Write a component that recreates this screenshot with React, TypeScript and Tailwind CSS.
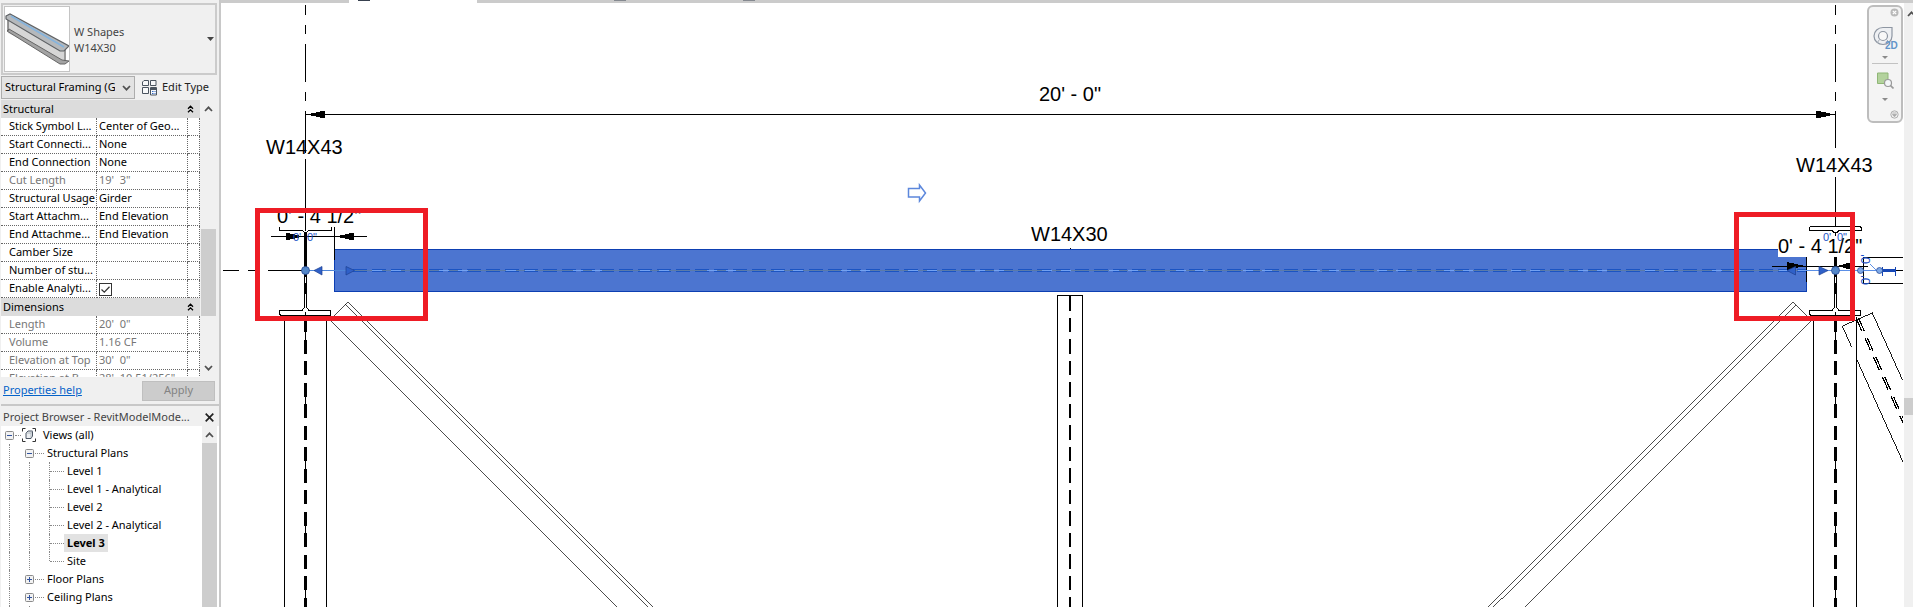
import React from "react";

type Property = { label: string; value: string; muted?: boolean; check?: boolean };
type Group = { title: string; rows: Property[] };

const groups: Group[] = [
  {
    title: "Structural",
    rows: [
      { label: "Stick Symbol L...", value: "Center of Geo..." },
      { label: "Start Connecti...", value: "None" },
      { label: "End Connection", value: "None" },
      { label: "Cut Length", value: "19'  3\"", muted: true },
      { label: "Structural Usage", value: "Girder" },
      { label: "Start Attachm...", value: "End Elevation" },
      { label: "End Attachme...", value: "End Elevation" },
      { label: "Camber Size", value: "" },
      { label: "Number of stu...", value: "" },
      { label: "Enable Analyti...", value: "", check: true },
    ],
  },
  {
    title: "Dimensions",
    rows: [
      { label: "Length", value: "20'  0\"", muted: true },
      { label: "Volume", value: "1.16 CF", muted: true },
      { label: "Elevation at Top", value: "30'  0\"", muted: true },
      { label: "Elevation at B...", value: "28'  10 51/256\"", muted: true },
    ],
  },
];

function Chevron({ up = false, className = "" }: { up?: boolean; className?: string }) {
  return (
    <svg viewBox="0 0 9 6" width="9" height="6" className={className} aria-hidden="true">
      <path d={up ? "M1 5 4.5 1.3 8 5" : "M1 1 4.5 4.7 8 1"} fill="none" stroke="#505050" strokeWidth="1.7" />
    </svg>
  );
}

function BeamPreview() {
  return (
    <svg viewBox="0 0 64 64" className="h-full w-full" aria-hidden="true">
      <path d="M3 10 59 43 59 54 3 26Z" fill="#d6d6d6" />
      <path d="M2 24 4 22 57 53 64 54 60 57 55 57Z" fill="#a3a3a3" stroke="#666" strokeWidth="1" />
      <path d="M3 11v13M60 42v12" stroke="#666" strokeWidth="1.3" />
      <path d="M1 9 5 7 64 39 59 44 55 44 1 12Z" fill="#b5b8bb" stroke="#5f6265" strokeWidth="1.2" />
      <path d="M6 9 59 40" stroke="#86b4dd" strokeWidth="1.8" />
    </svg>
  );
}

function EditTypeIcon() {
  return (
    <svg viewBox="0 0 17 17" width="17" height="17" aria-hidden="true">
      <g fill="#f7f8f9" stroke="#4a545f" strokeWidth="1">
        <path d="M3 1.5h4.500v5h-6V3zM9.500 1.500h5.500v5h-5.500zM1.500 8.500h6v6h-6z" />
        <path d="M9.500 8.500h6v7.500h-6z" />
      </g>
      <path d="M10 9h5v2h-5z" fill="#4a545f" />
      <path d="M11 12.500h1.500M13.500 12.500h1M11 14.500h1.500M13.500 14.500h1" stroke="#2f67c4" />
    </svg>
  );
}

function CheckBox({ id }: { id: string }) {
  return (
    <span className="grid h-[13px] w-[13px]">
      <input
        id={id}
        type="checkbox"
        defaultChecked
        className="peer col-start-1 row-start-1 h-[13px] w-[13px] appearance-none border border-[#333] bg-white"
      />
      <svg
        viewBox="0 0 13 13"
        width="13"
        height="13"
        className="pointer-events-none invisible col-start-1 row-start-1 peer-checked:visible"
        aria-hidden="true"
      >
        <path d="M2.500 6.500 5.300 9.200 10.500 3.800" fill="none" stroke="#333" strokeWidth="1.300" />
      </svg>
    </span>
  );
}

function PropertyTable() {
  return (
    <table className="w-[199px] table-fixed border-separate border-spacing-0 bg-white">
      <colgroup>
        <col className="w-[96px]" />
        <col className="w-[91px]" />
        <col className="w-[12px]" />
      </colgroup>
      {groups.map((g) => (
        <tbody key={g.title}>
          <tr>
            <th colSpan={3} className="h-[18px] bg-[#dcdcdc] p-0 font-normal">
              <div className="flex h-[18px] items-center justify-between pl-[2px] pr-1">
                <span>{g.title}</span>
                <button type="button" aria-label={`Collapse ${g.title}`} className="flex w-[11px] justify-center">
                  <svg viewBox="0 0 7 8" width="7" height="8" aria-hidden="true">
                    <path d="M1 3.700 3.500 1.200 6 3.700M1 7.300 3.500 4.800 6 7.300" fill="none" stroke="#000" strokeWidth="1.300" />
                  </svg>
                </button>
              </div>
            </th>
          </tr>
          {g.rows.map((r) => (
            <tr key={r.label} className={r.muted ? "text-[#767676]" : ""}>
              <td className="h-[18px] overflow-hidden whitespace-nowrap border-b border-r border-dotted border-[#666] p-0 pl-2">
                <div className="h-[17px] leading-[15px]">
                  {r.check ? <label htmlFor="analytical">{r.label}</label> : r.label}
                </div>
              </td>
              <td className="overflow-hidden whitespace-pre border-b border-r border-dotted border-[#666] p-0 pl-[2px]">
                {r.check ? (
                  <div className="flex h-[17px] items-end pb-px">
                    <CheckBox id="analytical" />
                  </div>
                ) : (
                  <div className="h-[17px] leading-[15px]">{r.value}</div>
                )}
              </td>
              <td className="border-b border-r border-dotted border-[#666] p-0" />
            </tr>
          ))}
        </tbody>
      ))}
    </table>
  );
}

function PropertiesPanel() {
  return (
    <section aria-label="Properties" className="flex h-[404px] shrink-0 flex-col pt-[3px]">
      <button
        type="button"
        className="mr-[2px] flex h-[72px] items-center border-2 border-[#cbcbcb] pl-px pr-px text-left text-[#444]"
      >
        <span className="h-[66px] w-[66px] border border-[#c4c4c4] bg-white">
          <BeamPreview />
        </span>
        <span className="flex-1 pl-1 pt-[2px] leading-4">
          W Shapes
          <br />
          W14X30
        </span>
        <svg viewBox="0 0 7 4" width="7" height="4" aria-hidden="true">
          <path d="M0 0h7L3.500 4z" fill="#444" />
        </svg>
      </button>

      <div className="flex h-[25px] items-center">
        <div className="relative flex h-[23px] w-[134px]">
          <select
            aria-label="Category"
            className="w-full appearance-none overflow-hidden border border-[#adadad] bg-[#e3e3e3] pl-[3px] pr-[19px] text-black"
          >
            <option>Structural Framing (G</option>
          </select>
          <Chevron className="pointer-events-none absolute right-1 top-[9px]" />
        </div>
        <button type="button" className="flex items-center gap-1 pl-[6px] text-[#222]">
          <EditTypeIcon />
          Edit Type
        </button>
      </div>

      <div className="flex h-[277px] overflow-hidden">
        <PropertyTable />
        <div className="ml-px flex w-[15px] flex-col items-center bg-[#f0f0f0] py-[6px]">
          <Chevron up />
          <div className="mt-[117px] h-[87px] w-full bg-[#cdcdcd]" />
          <Chevron className="mt-auto" />
        </div>
      </div>

      <div className="flex flex-1 items-center justify-between pl-[2px] pr-1">
        <a href="#help" className="text-[#0563c9] underline">
          Properties help
        </a>
        <button type="button" disabled className="h-5 w-[73px] border border-[#bfbfbf] bg-[#cccccc] text-[#838383]">
          Apply
        </button>
      </div>
    </section>
  );
}

function Rail() {
  return (
    <span className="flex w-5 shrink-0 self-stretch pl-2">
      <span className="border-l border-dotted border-[#888]" />
    </span>
  );
}

function Dots({ className }: { className: string }) {
  return <span className={`border-t border-dotted border-[#888] ${className}`} />;
}

function Toggle({ open }: { open: boolean }) {
  return (
    <button type="button" aria-label={open ? "Collapse" : "Expand"} className="ml-1 shrink-0">
      <svg viewBox="0 0 9 9" width="9" height="9" className="block" aria-hidden="true">
        <rect x=".5" y=".5" width="8" height="8" rx="1" fill="#f2f2f2" stroke="#8b8b8b" />
        <path d={open ? "M2 4.500h5" : "M2 4.500h5M4.500 2v5"} stroke="#31539f" />
      </svg>
    </button>
  );
}

function TreeGroup({ name, open, items = [] }: { name: string; open: boolean; items?: string[] }) {
  return (
    <li>
      <div className="flex h-[18px] items-center">
        <Rail />
        <Toggle open={open} />
        <Dots className="ml-px w-[9px]" />
        <span className="pl-[3px]">{name}</span>
      </div>
      {items.length > 0 && (
        <ul>
          {items.map((item, i) => (
            <li key={item} className="flex h-[18px] items-center">
              <Rail />
              <Rail />
              <span className="flex w-[23px] items-center self-stretch pl-2">
                <span
                  className={
                    i === items.length - 1
                      ? "h-[9px] self-start border-l border-dotted border-[#888]"
                      : "self-stretch border-l border-dotted border-[#888]"
                  }
                />
                <Dots className="flex-1" />
              </span>
              {item === "Level 3" ? (
                <a href="#view" className="bg-[#e2e2e2] px-[3px] font-bold leading-[18px]">
                  {item}
                </a>
              ) : (
                <a href="#view" className="px-[3px] leading-[18px]">
                  {item}
                </a>
              )}
            </li>
          ))}
        </ul>
      )}
    </li>
  );
}

function ProjectBrowser() {
  return (
    <section aria-label="Project Browser" className="flex min-h-0 flex-1 flex-col border-t-2 border-[#c8c8c8]">
      <div className="flex h-5 shrink-0 items-center justify-between pl-[2px] pr-[5px] pt-[2px] text-[#444]">
        <h2 className="whitespace-nowrap">Project Browser - RevitModelMode...</h2>
        <button type="button" aria-label="Close">
          <svg viewBox="0 0 9 9" width="9" height="9" aria-hidden="true">
            <path d="M.7.7 8.300 8.300M8.300.7.7 8.300" stroke="#222" strokeWidth="1.700" />
          </svg>
        </button>
      </div>
      <div className="flex min-h-0 flex-1 bg-white">
        <ul className="min-w-0 flex-1 overflow-hidden text-black">
          <li>
            <div className="flex h-[18px] items-center">
              <Toggle open />
              <Dots className="mx-px w-[6px]" />
              <svg viewBox="0 0 14 14" width="14" height="14" aria-hidden="true">
                <path d="M3.500.5h-3v3M10.500.5h3v3M.5 10.500v3h3M13.500 10.500v3h-3" fill="none" stroke="#333" />
                <path d="M4 5 6 3h4.500v5L9 10.500H4z" fill="#eceff2" stroke="#4b5563" />
                <path d="M4 5h5v5M9 5l1.500-2" fill="none" stroke="#9aa3ad" strokeWidth=".7" />
              </svg>
              <span className="pl-[7px]">Views (all)</span>
            </div>
            <ul>
              <TreeGroup
                name="Structural Plans"
                open
                items={["Level 1", "Level 1 - Analytical", "Level 2", "Level 2 - Analytical", "Level 3", "Site"]}
              />
              <TreeGroup name="Floor Plans" open={false} />
              <TreeGroup name="Ceiling Plans" open={false} />
              <li className="flex h-[18px]">
                <Rail />
                <Rail />
              </li>
            </ul>
          </li>
        </ul>
        <div className="mr-[2px] flex w-[15px] flex-col items-center bg-[#f0f0f0] pt-[6px]">
          <Chevron up />
          <div className="mt-[5px] w-full flex-1 bg-[#cdcdcd]" />
        </div>
      </div>
    </section>
  );
}

/* Column seen in elevation: face lines, dashed web and the grid line behind it. */
function Column({ x, left, right }: { x: number; left: number; right: number }) {
  return (
    <g stroke="#000">
      <path d={`M${left} 319V900M${right} 317V900`} />
      <path d={`M${x} 318V900`} strokeWidth="3" strokeDasharray="14 7.5" />
      <path d={`M${x} 332V900`} strokeDasharray="8 56.500" />
    </g>
  );
}

/* Wide-flange section in plan at a grid intersection. */
function Section({ x, thickFrom }: { x: number; thickFrom: number }) {
  return (
    <g stroke="#000" fill="none">
      <path d={`M${x} ${thickFrom}V277`} strokeWidth="3" />
      <path d={`M${x - 1} 277V308M${x + 1} 277V308`} />
      <path d={`M${x} 283V302`} strokeDasharray="11 8" />
      <path d={`M${x - 1} 307l-2 3h-22l-1 1v3l1 1h50v-5h-22l-2-3`} />
      <path d={`M${x} 312V319`} />
    </g>
  );
}

function Drawing() {
  return (
    <svg
      viewBox="221 3 1683 604"
      preserveAspectRatio="xMinYMin slice"
      className="block h-full w-full"
      shapeRendering="crispEdges"
      fontFamily="'Liberation Sans', Arial, sans-serif"
      fontSize="20"
      role="img"
      aria-label="Structural framing elevation"
    >
      {/* grid lines */}
      <g stroke="#000" fill="none">
        <path d="M305.500 5v10M305.500 25v9M305.500 44v38M305.500 92v9M305.500 111v42M305.500 159v72" />
        <path d="M1835.500 5v10M1835.500 25v9M1835.500 44v38M1835.500 92v9M1835.500 111v37M1835.500 177v80" />
        <path d="M223 270.500h16M248 270.500h8M268 270.500h36" />
      </g>

      {/* overall dimension */}
      <path d="M305 114.500H1836" stroke="#000" />
      <path d="M306 114.500l19-4v8zM1835 114.500l-19-4v8z" />
      <text x="1039" y="101">20' - 0"</text>
      <text x="266" y="154">W14X43</text>
      <text x="1796" y="172">W14X43</text>
      <text x="1031" y="241">W14X30</text>
      <path d="M1070.500 248v3" stroke="#000" />

      <path
        d="M908.500 188.500h11v-3.500l6 8-6 8v-4h-11z"
        fill="#fff"
        stroke="#5c87dc"
        strokeWidth="1.500"
        shapeRendering="auto"
      />

      {/* braces and posts */}
      <g stroke="#000" fill="none">
        <g strokeWidth=".7">
          <path d="M334 316 348 302 953 907M345.500 304 948 907M331 321 917 907" />
          <path d="M1810 319 1793 302 1188 907M1796 305 1193 907M1811 321 1225 907" />
        </g>
        <path d="M1057.500 900V295.500H1082.500V900" />
        <path d="M1070 296V900" strokeWidth="2" strokeDasharray="14.500 7" />
        <g strokeWidth=".9">
          <path d="M1852 347 1842.500 325.500 1872.500 312.500 1903 380M1857 360 1903 462" />
          <path d="M1856 318 1903 423M1858.500 318 1903 418" strokeDasharray="14 7.500" strokeWidth="1.200" />
        </g>
      </g>
      <Column x={305.5} left={284.5} right={326.5} />
      <Column x={1835.5} left={1813.5} right={1856.5} />

      {/* selected girder */}
      <rect x="334.500" y="249.500" width="1472" height="42" fill="#4c75d0" stroke="#0d3fb2" />
      <path d="M353 270.500H1806" stroke="#1b54c2" strokeWidth="3" strokeDasharray="14 5" />
      <path d="M355 270.500H1806" stroke="#5b7ba8" />
      <path d="M372 270.500H1806" stroke="#73a2f2" strokeDasharray="10 9 10 38" />

      {/* left connection */}
      <Section x={305.5} thickFrom={232} />
      <path d="M279.500 227v3h23l2 3M331.500 227v3h-23l-2 3M334.500 227v33M271 236.500h96" fill="none" stroke="#000" />
      <path d="M286 232.500v8l17-4zM354 232.500v8l-19-4z" />
      <text x="277" y="223">0' - 4 1/2"</text>
      <text x="293" y="241" fontSize="11" fill="#1d52c8">
        0'
      </text>
      <text x="307" y="241" fontSize="11" fill="#1d52c8">
        0"
      </text>
      <path d="M306 270.500h49" stroke="#4f86d8" />
      <g shapeRendering="auto" stroke="#1c3f8f" strokeWidth=".7">
        <path d="M314 270.500l8-4v8.500zM354.500 270.500l-8.500-4v8.500z" fill="#2f60c8" />
        <circle cx="305.500" cy="270.500" r="4" fill="#5387c8" />
      </g>

      {/* right connection */}
      <path d="M1811 226.500h49l1 1v3h-22l-2 2h-3l-2-2h-22l-1-1v-2z" fill="#fff" stroke="#000" />
      <path d="M1778 236h75v21h-75z" fill="#fff" />
      <path d="M1806.500 257v25M1772 266.500h96" stroke="#000" />
      <path d="M1787 262v8l18-4zM1852 262v8l-15-4z" />
      <Section x={1835.5} thickFrom={257} />
      <text x="1778" y="253">0' - 4 1/2"</text>
      <text x="1823" y="241" fontSize="11" fill="#1d52c8">
        0'
      </text>
      <text x="1837" y="241" fontSize="11" fill="#1d52c8">
        0"
      </text>
      <path d="M1903 257.500H1863.500V283.500H1903M1896 270.500h7" fill="none" stroke="#000" />
      <path d="M1806 270.500h74M1870 264l6 6" stroke="#5b8fe6" />
      <path d="M1882 270.500h14" stroke="#1546b5" strokeWidth="3" />
      <path d="M1882.500 267v9M1895.500 267v9" stroke="#1546b5" />
      <text transform="translate(1870 264) rotate(-90)" fontSize="13" fill="#1d52c8">
        0'
      </text>
      <text transform="translate(1870 285) rotate(-90)" fontSize="13" fill="#1d52c8">
        0'
      </text>
      <g shapeRendering="auto" stroke="#1c3f8f" strokeWidth=".7">
        <path d="M1787 270.500l8.500-4v8.500zM1828 270.500l-9-4v8.500z" fill="#2f60c8" />
        <circle cx="1835.500" cy="270.500" r="4" fill="#5387c8" />
        <circle cx="1860.500" cy="270.500" r="3" fill="#7fa9e6" />
        <circle cx="1879.500" cy="270.500" r="3" fill="#7fa9e6" />
      </g>

      {/* markups */}
      <g fill="none" stroke="#ee1c25" strokeWidth="5">
        <rect x="257.500" y="210.500" width="168" height="108" />
        <rect x="1736.500" y="214.500" width="116" height="104" />
      </g>
    </svg>
  );
}

function Caret() {
  return (
    <svg viewBox="0 0 6 3" width="6" height="3" aria-hidden="true">
      <path d="M0 0h6L3 3z" fill="#8a8a8a" />
    </svg>
  );
}

function NavigationBar() {
  return (
    <nav
      aria-label="Navigation"
      className="absolute right-px top-[2px] flex h-[118px] w-9 flex-col items-center rounded-md border-2 border-[#bdbdbd] bg-[#f4f4f4]"
    >
      <button type="button" aria-label="Close" className="mr-[2px] mt-px self-end">
        <svg viewBox="0 0 9 9" width="9" height="9" className="block" aria-hidden="true">
          <circle cx="4.500" cy="4.500" r="4" fill="#b9b9b9" />
          <path d="M2.800 2.800 6.200 6.200M6.200 2.800 2.800 6.200" stroke="#fff" strokeWidth="1.200" />
        </svg>
      </button>
      <button type="button" aria-label="Steering wheel" className="mt-[9px] flex flex-col items-center gap-[6px]">
        <svg viewBox="0 0 24 24" width="24" height="24" className="overflow-visible" aria-hidden="true">
          <path d="M10 1.500h9v8.500a9 8.500 0 1 1-9-8.500z" fill="#eef0f3" stroke="#8e96a2" strokeWidth="1.200" />
          <circle cx="10" cy="10" r="4.500" fill="#f8f8f8" stroke="#8e96a2" strokeWidth="1.200" />
          <path d="M6.500 13.500 4 17M13.500 13.500l2 2" stroke="#a4abb5" />
          <text x="12" y="23" fontSize="10" fontWeight="bold" fontFamily="'Liberation Sans', sans-serif" fill="#6295c9">
            2D
          </text>
        </svg>
        <Caret />
      </button>
      <hr className="mt-1 w-[26px] border-[#c2c2c2]" />
      <button type="button" aria-label="Zoom" className="mt-2 flex flex-col items-center gap-[9px]">
        <svg viewBox="0 0 17 17" width="17" height="17" aria-hidden="true">
          <path d="M.5 1h10.500v10.500H.5z" fill="#b3d29d" stroke="#8fb676" />
          <circle cx="11" cy="11" r="3.500" fill="#f3f6f8" stroke="#999" strokeWidth="1.200" />
          <path d="M13.500 13.500 16.500 16.500" stroke="#999" strokeWidth="1.700" />
        </svg>
        <Caret />
      </button>
      <button type="button" aria-label="Options" className="mb-[2px] mr-[2px] mt-auto self-end">
        <svg viewBox="0 0 9 9" width="9" height="9" className="block" aria-hidden="true">
          <circle cx="4.500" cy="4.500" r="3.700" fill="#eee" stroke="#b0b0b0" />
          <path d="M2.300 3h4.400M2.500 4.500h4L4.500 6.700z" fill="#aaa" stroke="#aaa" strokeWidth=".8" />
        </svg>
      </button>
    </nav>
  );
}

export default function App() {
  return (
    <div className="flex h-screen overflow-hidden bg-white font-['Noto_Sans','Open_Sans',sans-serif] text-[11px] text-black">
      <aside className="flex w-[221px] shrink-0 flex-col border-r-2 border-[#c8c8c8] bg-[#f0f0f0] pl-px">
        <PropertiesPanel />
        <ProjectBrowser />
      </aside>
      <main className="flex min-w-0 flex-1 flex-col">
        <div className="flex h-[3px] shrink-0 items-start bg-[#cbcbcb]">
          <span className="ml-32 h-[3px] w-32 bg-white pl-[9px]">
            <span className="block h-px w-3 bg-[#38414f]" />
          </span>
          <span className="ml-[137px] h-px w-3 bg-[#858990]" />
          <span className="ml-[117px] h-px w-3 bg-[#858990]" />
        </div>
        <div className="flex min-h-0 flex-1">
          <div className="relative min-w-0 flex-1 overflow-hidden">
            <Drawing />
            <NavigationBar />
          </div>
          <div className="w-[9px] shrink-0 overflow-hidden bg-[#f0f0f0] pt-2">
            <Chevron up className="ml-[3px] block" />
            <div className="mt-[381px] h-[17px] bg-[#cdcdcd]" />
          </div>
        </div>
      </main>
    </div>
  );
}
